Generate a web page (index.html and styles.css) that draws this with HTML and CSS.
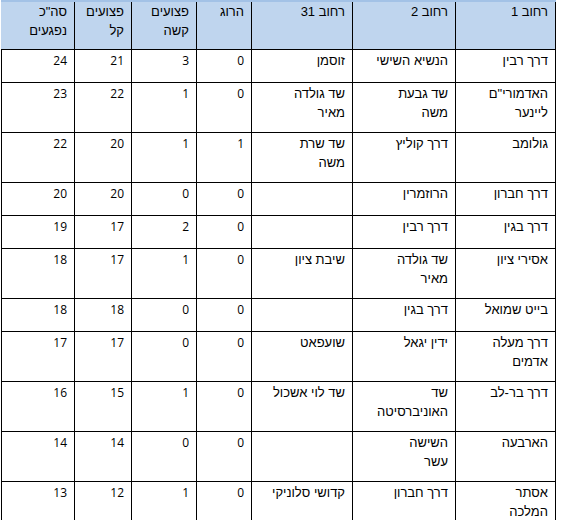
FILE: index.html
```html
<!DOCTYPE html>
<html lang="he">
<head>
<meta charset="utf-8">
<link rel="stylesheet" href="styles.css">
</head>
<body>
<table class="grid" dir="rtl">
  <colgroup>
    <col class="c1"><col class="c2"><col class="c3"><col class="c4"><col class="c5"><col class="c6"><col class="c7">
  </colgroup>
  <thead>
    <tr class="head">
      <th>רחוב 1</th><th>רחוב 2</th><th>רחוב 31</th><th>הרוג</th><th>פצועים<br>קשה</th><th>פצועים<br>קל</th><th>סה"כ<br>נפגעים</th>
    </tr>
  </thead>
  <tbody>
    <tr class="one"><td>דרך רבין</td><td>הנשיא השישי</td><td>זוסמן</td><td class="num">0</td><td class="num">3</td><td class="num">21</td><td class="num">24</td></tr>
    <tr class="two"><td>האדמורי"ם<br>ליינער</td><td>שד גבעת<br>משה</td><td>שד גולדה<br>מאיר</td><td class="num">0</td><td class="num">1</td><td class="num">22</td><td class="num">23</td></tr>
    <tr class="two"><td>גולומב</td><td>דרך קוליץ</td><td>שד שרת<br>משה</td><td class="num">1</td><td class="num">1</td><td class="num">20</td><td class="num">22</td></tr>
    <tr class="one"><td>דרך חברון</td><td>הרוזמרין</td><td></td><td class="num">0</td><td class="num">0</td><td class="num">20</td><td class="num">20</td></tr>
    <tr class="one"><td>דרך בגין</td><td>דרך רבין</td><td></td><td class="num">0</td><td class="num">2</td><td class="num">17</td><td class="num">19</td></tr>
    <tr class="two"><td>אסירי ציון</td><td>שד גולדה<br>מאיר</td><td>שיבת ציון</td><td class="num">0</td><td class="num">1</td><td class="num">17</td><td class="num">18</td></tr>
    <tr class="one"><td>בייט שמואל</td><td>דרך בגין</td><td></td><td class="num">0</td><td class="num">0</td><td class="num">18</td><td class="num">18</td></tr>
    <tr class="two"><td>דרך מעלה<br>אדמים</td><td>ידין יגאל</td><td>שועפאט</td><td class="num">0</td><td class="num">0</td><td class="num">17</td><td class="num">17</td></tr>
    <tr class="two"><td>דרך בר-לב</td><td>שד<br>האוניברסיטה</td><td>שד לוי אשכול</td><td class="num">0</td><td class="num">1</td><td class="num">15</td><td class="num">16</td></tr>
    <tr class="two"><td>הארבעה</td><td>השישה<br>עשר</td><td></td><td class="num">0</td><td class="num">0</td><td class="num">14</td><td class="num">14</td></tr>
    <tr class="two"><td>אסתר<br>המלכה</td><td>דרך חברון</td><td>קדושי סלוניקי</td><td class="num">0</td><td class="num">1</td><td class="num">12</td><td class="num">13</td></tr>
  </tbody>
</table>
</body>
</html>
```
FILE: styles.css
```css
html, body {
  margin: 0;
  padding: 0;
  background: #ffffff;
}
body {
  padding-left: 1px;
  font-family: "Liberation Sans", Arial, sans-serif;
  font-size: 13px;
  color: #000;
}
.grid {
  border-collapse: collapse;
  table-layout: fixed;
  width: 555px;
}
.c1 { width: 100px; }
.c2 { width: 103px; }
.c3 { width: 101px; }
.c4 { width: 55px; }
.c5 { width: 65px; }
.c6 { width: 57px; }
.c7 { width: 73px; }
.grid th, .grid td {
  border: 1px solid #000;
  text-align: right;
  vertical-align: top;
  padding: 1px 7px 0 7px;
  line-height: 19px;
  font-weight: normal;
  overflow: hidden;
}
.grid th {
  background: #bfd5ee;
  border-top: 2px solid #a3c2e6;
  padding-top: 0;
}
.grid thead tr:first-child th:last-child { border-left-color: #bfd5ee; }
.head { height: 48px; }
.one { height: 33px; }
.two { height: 50px; }
.num {
  font-family: "Open Sans", "Liberation Sans", sans-serif;
  font-size: 12px;
  padding-right: 8px;
}
```
